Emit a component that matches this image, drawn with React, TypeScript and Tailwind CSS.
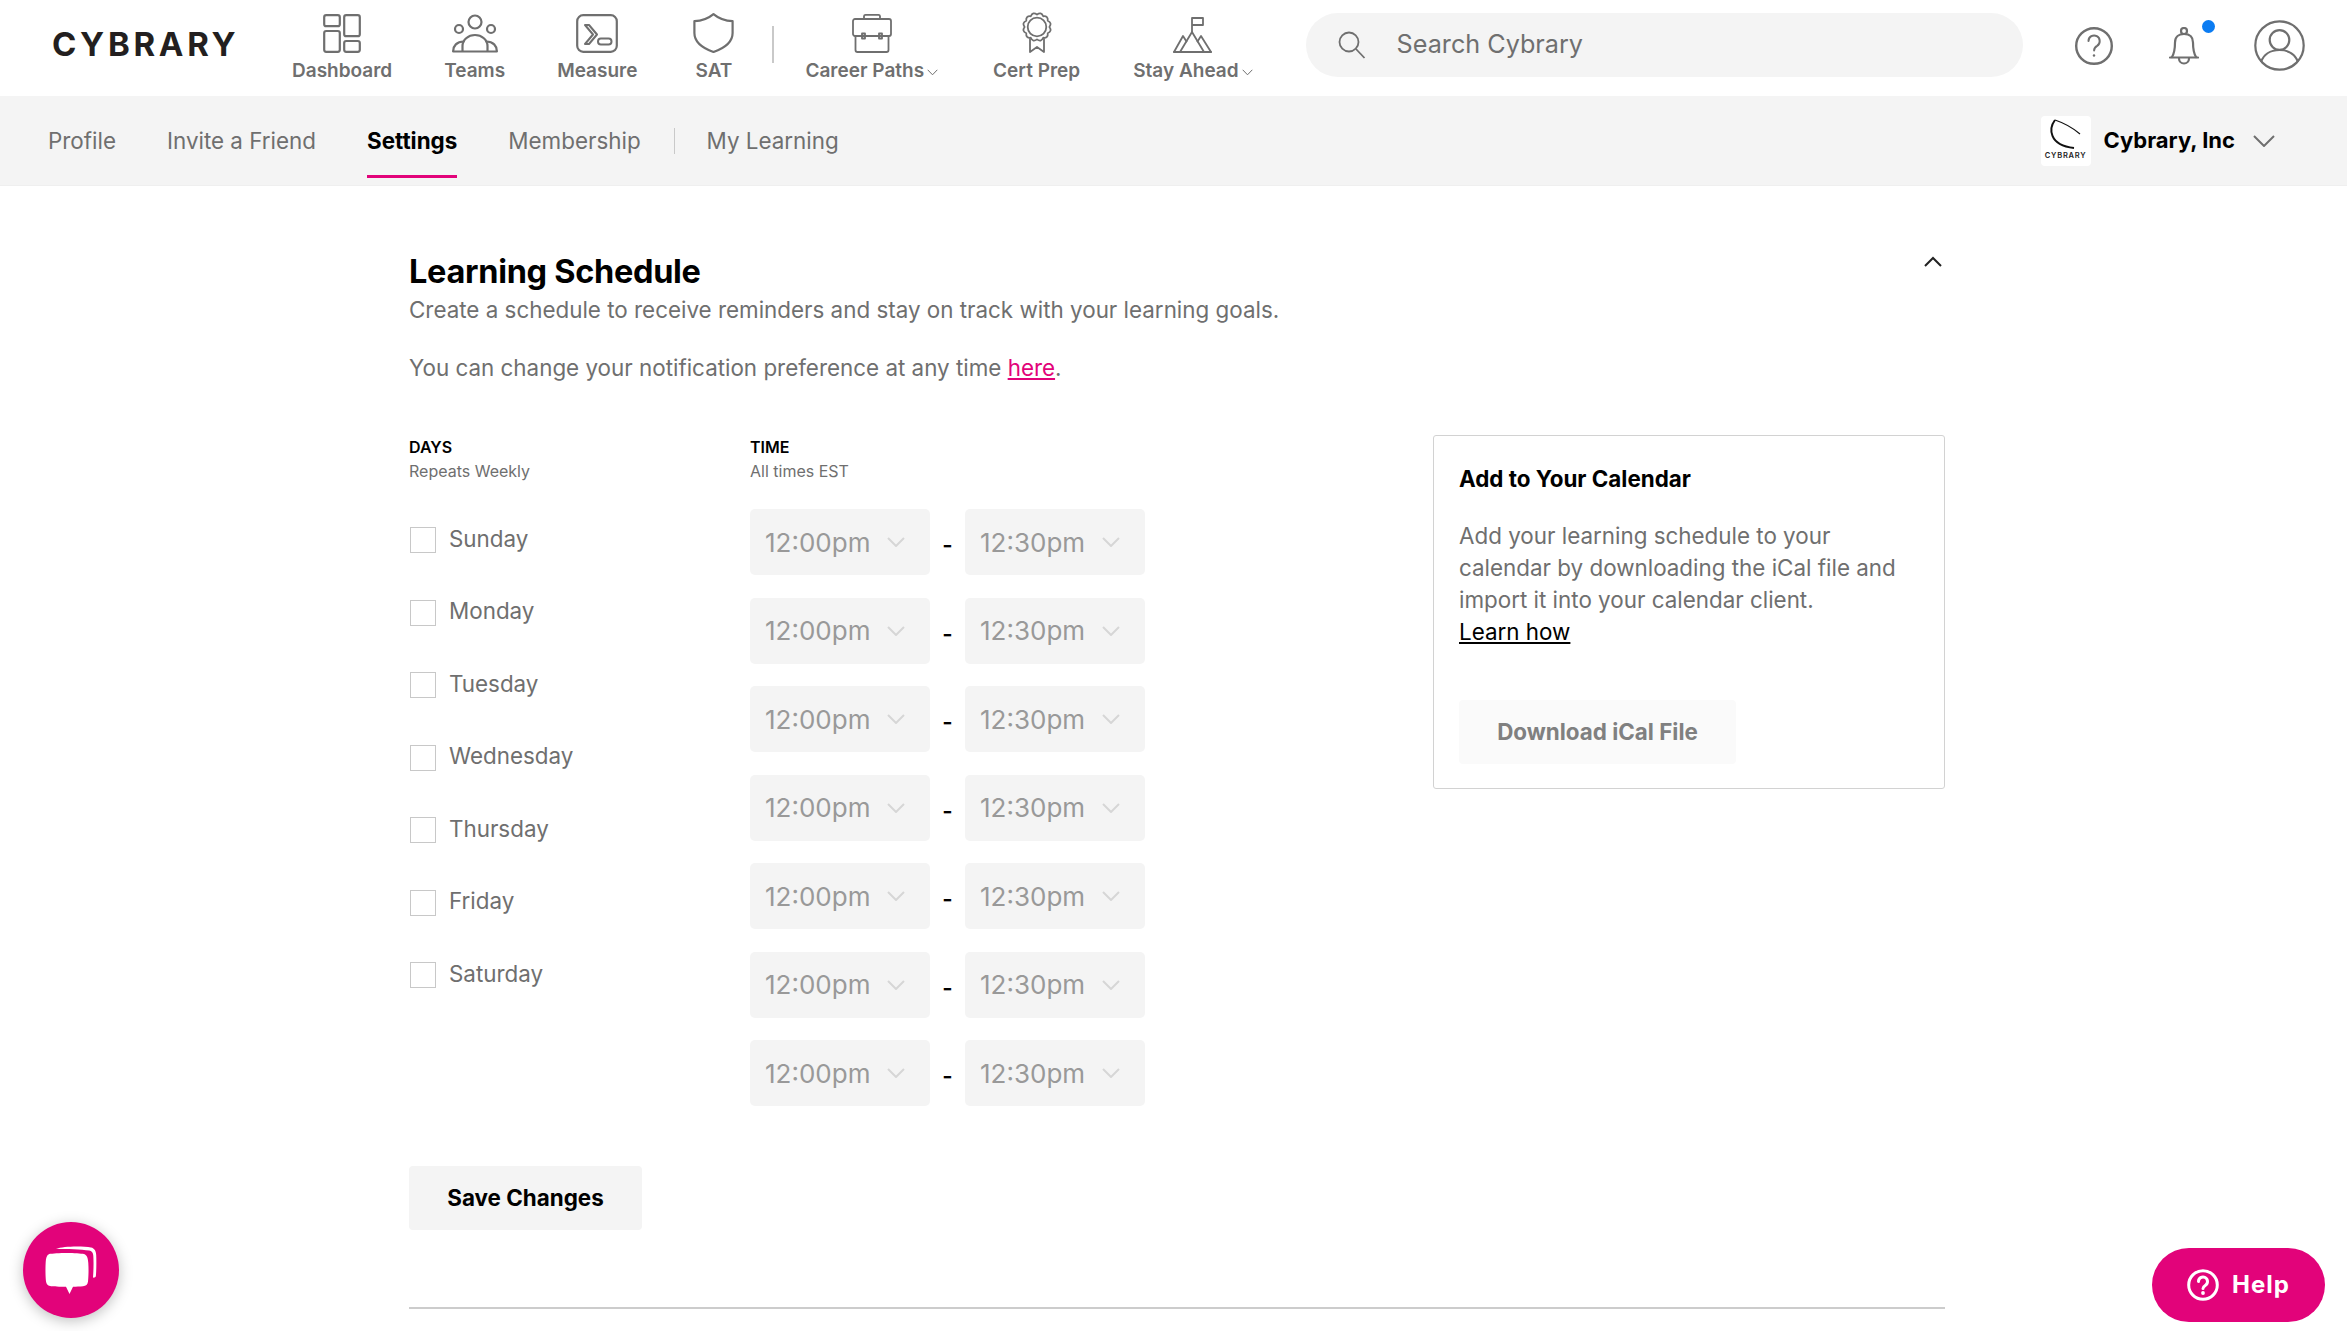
import React from "react";

const G = "#6f6f6f";

const scallop = (() => {
  const n = 12, R = 14.2, r = 12.4, cx = 15, cy = 15;
  let d = "";
  for (let i = 0; i < n; i++) {
    const a0 = (i / n) * Math.PI * 2, am = ((i + 0.5) / n) * Math.PI * 2, a1 = ((i + 1) / n) * Math.PI * 2;
    const p = (a: number, q: number) => `${(cx + Math.cos(a) * q).toFixed(2)} ${(cy + Math.sin(a) * q).toFixed(2)}`;
    if (i === 0) d += `M${p(a0, r)}`;
    d += `Q${p(am, R + 1.8)} ${p(a1, r)}`;
  }
  return d + "Z";
})();

const sw = { fill: "none", stroke: G, strokeWidth: 2.2, strokeLinecap: "round" as const, strokeLinejoin: "round" as const };

const IconDashboard = () => (
  <svg width="38" height="39" viewBox="0 0 38 39" {...sw}>
    <rect x="1.2" y="1.2" width="15.6" height="11" rx="2" />
    <rect x="21.2" y="1.2" width="15.6" height="21" rx="2" />
    <rect x="1.2" y="17" width="15.6" height="20.8" rx="2" />
    <rect x="21.2" y="27" width="15.6" height="10.8" rx="2" />
  </svg>
);
const IconTeams = () => (
  <svg width="46" height="39" viewBox="0 0 46 39" {...sw}>
    <circle cx="23" cy="8" r="6.5" />
    <circle cx="7" cy="15" r="4" />
    <circle cx="39" cy="15" r="4" />
    <path d="M10.5 37v-5a12.5 11 0 0 1 25 0v5" />
    <path d="M1.2 37c0-5 3.5-9.5 10.5-9.5" />
    <path d="M44.8 37c0-5-3.5-9.5-10.5-9.5" />
    <path d="M1.2 37.5H44.8" />
  </svg>
);
const IconMeasure = () => (
  <svg width="42" height="39" viewBox="0 0 42 39" {...sw}>
    <rect x="1.2" y="1.2" width="39.6" height="36.6" rx="6" />
    <path d="M9 11h4l8 9.5-8 9.5H9l8-9.5z" strokeWidth="2" />
    <rect x="22" y="24.6" width="13.5" height="5.8" rx="2.9" strokeWidth="2" />
  </svg>
);
const IconShield = () => (
  <svg width="41" height="40" viewBox="0 0 41 40" {...sw}>
    <path d="M20.5 1.2C16 5 8 8 1.4 8.2V20C1.4 30 12 36 20.5 39 29 36 39.6 30 39.6 20V8.2C33 8 25 5 20.5 1.2Z" />
  </svg>
);
const IconCase = () => (
  <svg width="40" height="39" viewBox="0 0 40 39" {...sw} strokeWidth="1.8">
    <path d="M12 5V2.2A1.5 1.5 0 0 1 13.5.9h13A1.5 1.5 0 0 1 28 2.2V5" />
    <rect x="1" y="5" width="38" height="17" rx="2" />
    <path d="M3.5 22V36a2 2 0 0 0 2 2h29a2 2 0 0 0 2-2V22" />
    <rect x="10" y="19.5" width="3" height="5" />
    <rect x="27" y="19.5" width="3" height="5" />
  </svg>
);
const IconCert = () => (
  <svg width="30" height="41" viewBox="0 0 30 41" {...sw} strokeWidth="1.8">
    <path d={scallop} />
    <circle cx="15" cy="15" r="9.3" />
    <path d="M8 27V40l7-5 7 5V27" />
  </svg>
);
const IconPeak = () => (
  <svg width="39" height="36" viewBox="0 0 39 36" {...sw} strokeWidth="1.8">
    <path d="M19 15V1H30V8H19" />
    <path d="M19 15L7 35H31Z" />
    <path d="M1 35L10 19L13.5 24.5" />
    <path d="M38 35L28 19L24.5 24.5" />
    <path d="M1 35H38" />
  </svg>
);

const MiniChevron = () => (
  <svg width="11" height="7" viewBox="0 0 11 7" className="ml-[3px] mt-[3px]" fill="none" stroke={G} strokeWidth="1">
    <path d="M.7.8 5.5 5.8 10.3.8" />
  </svg>
);

const navItems = [
  { label: "Dashboard", icon: <IconDashboard /> },
  { label: "Teams", icon: <IconTeams /> },
  { label: "Measure", icon: <IconMeasure /> },
  { label: "SAT", icon: <IconShield />, extra: "ml-[4px]" },
];
const navItems2 = [
  { label: "Career Paths", icon: <IconCase />, chevron: true },
  { label: "Cert Prep", icon: <IconCert />, extra: "ml-[3px]" },
  { label: "Stay Ahead", icon: <IconPeak />, chevron: true, extra: "ml-[1px]" },
];

function NavItem({ label, icon, chevron, extra }: { label: string; icon: React.ReactNode; chevron?: boolean; extra?: string }) {
  return (
    <div className={`flex h-[96px] flex-col items-center pt-[12px] ${extra ?? ""}`}>
      <div className="flex h-[41px] items-end justify-center">{icon}</div>
      <div className="flex items-center text-[19px] font-semibold leading-[36px] text-[#6f6f6f] whitespace-nowrap">
        {label}
        {chevron && <MiniChevron />}
      </div>
    </div>
  );
}

function Header() {
  return (
    <header className="flex h-[96px] items-start bg-white">
      <div className="flex h-[89px] w-[292px] items-center pl-[52px]">
        <span className="text-[33px] font-bold leading-none tracking-[3.7px] text-[#231f20]">CYBRARY</span>
      </div>
      <nav className="flex gap-[52px]">
        {navItems.map((n) => (
          <NavItem key={n.label} {...n} />
        ))}
      </nav>
      <div className="ml-[38px] mr-[31px] mt-[26px] h-[37px] w-[2px] bg-[#c9c9c9]" />
      <nav className="flex gap-[52px]">
        {navItems2.map((n) => (
          <NavItem key={n.label} {...n} />
        ))}
      </nav>
      <div className="ml-[53px] mt-[13px] flex h-[64px] w-[717px] items-center rounded-full bg-[#f4f4f4] pl-[32px]">
        <svg width="28" height="28" viewBox="0 0 28 28" fill="none" stroke={G} strokeWidth="1.8">
          <circle cx="11" cy="11" r="9.5" />
          <path d="M18 18l8.5 9" />
        </svg>
        <span className="ml-[31px] text-[25.2px] text-[#6f6f6f]">Search Cybrary</span>
      </div>
      <svg className="ml-[51px] mt-[27px]" width="40" height="38" viewBox="0 0 40 38" fill="none" stroke={G} strokeWidth="2.4" strokeLinecap="round">
        <circle cx="20" cy="19" r="17.8" />
        <path d="M14.5 14a5.6 5.6 0 1 1 8.6 4.8c-2 1.2-3 2.3-3 4.6" strokeWidth="2" />
        <circle cx="20" cy="28.5" r="1.2" fill={G} stroke="none" />
      </svg>
      <div className="relative ml-[55px] mt-[27px] h-[38px] w-[30px]">
        <svg width="30" height="38" viewBox="0 0 30 38" fill="none" stroke={G} strokeWidth="2.2" strokeLinecap="round">
          <circle cx="15" cy="4" r="3" />
          <path d="M3 30C6 25 6 19 6 15.500C6 9.500 10 7 15 7s9 2.500 9 8.500C24 19 24 25 27 30" />
          <path d="M1 30.500H29" />
          <path d="M10 31.500a5 5 0 0 0 10 0" />
        </svg>
        <span className="absolute left-[33px] top-[-7px] h-[13px] w-[13px] rounded-full bg-[#0b7cf2]" />
      </div>
      <svg className="ml-[55px] mt-[20px]" width="51" height="51" viewBox="0 0 51 51" fill="none" stroke={G} strokeWidth="2.2">
        <circle cx="25.5" cy="25.5" r="24.2" />
        <circle cx="25.5" cy="20" r="9.8" />
        <path d="M7 42C9.500 35 16 30 25.500 30S41.500 35 44 42" />
      </svg>
    </header>
  );
}

function SubNav() {
  const link = "text-[22.4px] text-[#6f6f6f] whitespace-nowrap";
  return (
    <div className="flex h-[90px] items-center border-b border-[#efefef] bg-[#f4f4f4] pl-[48px] pr-[72px]">
      <span className={link}>Profile</span>
      <span className={`${link} ml-[51px]`}>Invite a Friend</span>
      <div className="relative ml-[51px] flex h-full items-center">
        <span className="text-[22.4px] font-bold text-black">Settings</span>
        <span className="absolute bottom-[7px] left-0 right-0 h-[3px] bg-[#e2037a]" />
      </div>
      <span className={`${link} ml-[51px]`}>Membership</span>
      <div className="ml-[33px] h-[26px] w-[1px] bg-[#c9c9c9]" />
      <span className={`${link} ml-[32px]`}>My Learning</span>
      <div className="ml-auto flex items-center">
        <div className="flex h-[50px] w-[50px] flex-col items-center rounded-[4px] bg-white">
          <svg width="40" height="38" viewBox="0 0 40 38" fill="none" stroke="#111">
            <path d="M9 4C3 12 2 29 28 32" strokeWidth="2" />
            <path d="M9 4C18 7 27 12 34 18" strokeWidth="1.2" />
          </svg>
          <span className="mt-[-3px] text-[7.5px] font-semibold leading-[9px] tracking-[0.8px] text-[#222]">CYBRARY</span>
        </div>
        <span className="ml-[13px] text-[22px] font-bold text-black">Cybrary, Inc</span>
        <svg className="ml-[18px]" width="22" height="12" viewBox="0 0 22 12" fill="none" stroke={G} strokeWidth="2">
          <path d="M1 1l10 10L21 1" />
        </svg>
      </div>
    </div>
  );
}

const days = ["Sunday", "Monday", "Tuesday", "Wednesday", "Thursday", "Friday", "Saturday"];

function TimeSelect({ value }: { value: string }) {
  return (
    <div className="flex h-[66px] w-[180px] items-center rounded-[5px] bg-[#f4f4f4] pl-[14px]">
      <span className="w-[123px] pl-[1px] text-[26px] text-[#999999]">{value}</span>
      <svg width="18" height="10" viewBox="0 0 18 10" fill="none" stroke="#d6d6d6" strokeWidth="2">
        <path d="M1 1l8 8 8-8" />
      </svg>
    </div>
  );
}

function Schedule() {
  return (
    <section className="flex">
      <div className="w-[341px]">
        <div className="text-[16px] font-semibold leading-[23px] text-black">DAYS</div>
        <div className="text-[16px] leading-[25px] text-[#6f6f6f]">Repeats Weekly</div>
        <div className="mt-[20px]">
          {days.map((d) => (
            <div key={d} className="flex h-[72.5px] items-center">
              <span className="ml-[1px] h-[26px] w-[26px] border-[1.5px] border-[#c8c8c8] bg-white" />
              <span className="ml-[13px] mb-[3px] text-[22.4px] text-[#6f6f6f]">{d}</span>
            </div>
          ))}
        </div>
      </div>
      <div>
        <div className="text-[16px] font-semibold leading-[23px] text-black">TIME</div>
        <div className="text-[16px] leading-[25px] text-[#6f6f6f]">All times EST</div>
        <div className="mt-[25px] flex flex-col gap-[22.500px]">
          {days.map((d) => (
            <div key={d} className="flex items-center">
              <TimeSelect value="12:00pm" />
              <span className="flex w-[35px] justify-center pt-[7px] text-[22.4px] font-semibold leading-none text-black">-</span>
              <TimeSelect value="12:30pm" />
            </div>
          ))}
        </div>
      </div>
    </section>
  );
}

function CalendarCard() {
  return (
    <aside className="mt-[-1px] h-[354px] w-[512px] rounded-[3px] border-[1.5px] border-[#d2d2d2] px-[25px] pt-[26.500px]">
      <h3 className="text-[22.4px] font-bold leading-[32px] text-black">Add to Your Calendar</h3>
      <p className="mt-[25px] text-[22.4px] leading-[32px] text-[#6f6f6f]">
        Add your learning schedule to your calendar by downloading the iCal file and import it into your calendar client.
        <br />
        <span className="text-black underline">Learn how</span>
      </p>
      <div className="mt-[52px] flex h-[64px] w-[277px] items-center justify-center rounded-[4px] bg-[#fafafa] text-[22.4px] font-bold text-[#808080]">
        Download iCal File
      </div>
    </aside>
  );
}

export default function App() {
  return (
    <div className="relative h-[1331px] overflow-hidden bg-white font-['Inter',sans-serif]">
      <Header />
      <SubNav />
      <main className="ml-[409px] w-[1536px] pt-[65px]">
        <div className="flex items-start justify-between">
          <h2 className="text-[32.5px] font-bold leading-[42px] tracking-[-0.3px] text-black">Learning Schedule</h2>
          <svg className="mr-[3px] mt-[5px]" width="18" height="11" viewBox="0 0 18 11" fill="none" stroke="#222" strokeWidth="2">
            <path d="M1 10l8-8 8 8" />
          </svg>
        </div>
        <p className="mt-[-1px] text-[22.4px] leading-[36px] text-[#6f6f6f]">
          Create a schedule to receive reminders and stay on track with your learning goals.
        </p>
        <p className="mt-[22px] text-[22.4px] leading-[36px] text-[#6f6f6f]">
          You can change your notification preference at any time <span className="text-[#e2037a] underline">here</span>.
        </p>
        <div className="mt-[50px] flex justify-between">
          <Schedule />
          <CalendarCard />
        </div>
        <button className="mt-[60px] flex h-[64px] w-[233px] items-center justify-center rounded-[4px] bg-[#f4f4f4] text-[22.4px] font-bold text-black">
          Save Changes
        </button>
        <div className="mt-[77px] h-[2px] bg-[#cccccc]" />
      </main>

      <div className="absolute left-[23px] top-[1222px] h-[96px] w-[96px] rounded-full bg-[#e2037a] shadow-[0_3px_14px_rgba(0,0,0,0.25)]">
        <svg width="96" height="96" viewBox="0 0 96 96" fill="#fff">
          <path d="M26 32C33 30.500 55 30.500 61 32 64 33 65 36 65.300 41c.4 6 .3 13-.3 18.500-.3 3-2 4.500-5 4.800-3 .3-7 .5-10 .5l-3.500 7.200-3.500-7.200c-6 0-13-.2-16-.8-2.500-.5-3.500-2-4-4.500-.6-5-.7-14-.3-19.500.2-4 1-7 3.600-8z" />
          <path d="M33 27C40 24 60 24 68 25.500 71.500 26.200 73 29 73.200 33c.3 6 .2 15-.3 21-.2 1.300-2 2-2.900 1.500.5-6 .8-17 .2-22.500-.3-2.500-1.500-4-4-4.400-8-1.300-22-1.600-33.200-1.600z" />
        </svg>
      </div>

      <div className="absolute left-[2152px] top-[1248px] flex h-[74px] w-[173px] items-center rounded-full bg-[#e2037a] pl-[35px] text-white">
        <svg width="32" height="32" viewBox="0 0 32 32" fill="none" stroke="#fff" strokeWidth="3" strokeLinecap="round">
          <circle cx="16" cy="16" r="14.300" />
          <path d="M11.500 12.500a4.500 4.500 0 1 1 7 3.700c-1.500 1-2.500 1.700-2.500 3.300" />
          <circle cx="16" cy="24" r="1.900" fill="#fff" stroke="none" />
        </svg>
        <span className="ml-[13px] text-[24px] font-bold tracking-[1px]">Help</span>
      </div>
    </div>
  );
}
